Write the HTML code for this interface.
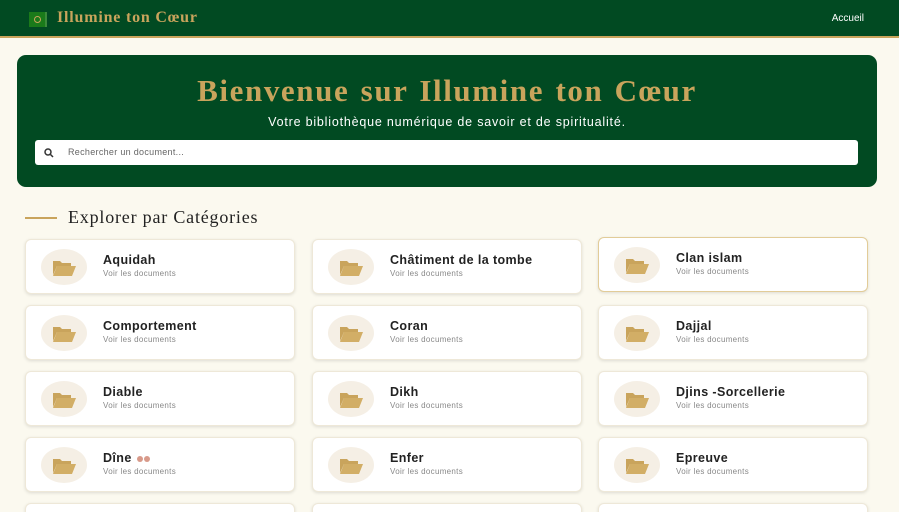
<!DOCTYPE html>
<html><head><meta charset="utf-8"><style>
*{box-sizing:border-box;margin:0;padding:0}
html,body{width:899px;height:512px;overflow:hidden}
body{background:#fbf9ef;font-family:"Liberation Sans",sans-serif;position:relative}
.nav{position:absolute;left:0;top:0;width:899px;height:38px;background:#014a22;border-bottom:2px solid #c9a45c}
.logo{position:absolute;left:29px;top:12px;width:18px;height:15px;background:#1a7a1a;border-right:2px solid #3b8a3b}
.logo:after{content:"";position:absolute;left:5px;top:4px;width:5px;height:5px;border:1px solid #c9a45c;border-radius:50%}
.brand{position:absolute;left:57px;top:9px;color:#c9a45c;font:bold 16px "Liberation Serif",serif;letter-spacing:0.8px}
.acc{position:absolute;right:35px;top:13px;color:#fff;font-size:10px}
.hero{position:absolute;left:17px;top:55px;width:860px;height:132px;background:#014a22;border-radius:9px}
.hero h1{position:absolute;left:0;width:100%;top:18px;text-align:center;color:#c9a45c;font:bold 31px "Liberation Serif",serif;letter-spacing:1.6px;word-spacing:2px}
.hero p{position:absolute;left:0;width:100%;top:60px;text-align:center;color:#fff;font-size:12.5px;letter-spacing:0.8px}
.search{position:absolute;left:18px;top:85px;width:823px;height:25px;background:#fff;border-radius:3px}
.search span{position:absolute;left:33px;top:7px;font-size:9px;color:#666;letter-spacing:0.3px}
.sec{position:absolute;left:25px;top:207px;font:18px "Liberation Serif",serif;color:#222;letter-spacing:0.8px}
.sec i{display:inline-block;width:32px;height:2px;background:#c9a45c;vertical-align:middle;margin-right:11px;position:relative;top:-1px}
.card{position:absolute;width:270px;height:55px;background:#fff;border-radius:6px;box-shadow:0 1px 3px rgba(0,0,0,.12);border:1px solid #eee8d8}
.card.h{border-color:#e2cc98}
.ic{position:absolute;left:15px;top:9px;width:46px;height:36px;border-radius:50%;background:#f5efe5}
.ic svg{position:absolute;left:11px;top:11px}
.t{position:absolute;left:77px;top:13px;font-weight:bold;font-size:12.5px;color:#222;letter-spacing:0.4px}
.s{position:absolute;left:77px;top:29px;font-size:8px;color:#888;letter-spacing:0.3px}
.dot{display:inline-block;width:6px;height:6px;border-radius:50%;background:#d89a8a;margin-left:1px;vertical-align:0}
</style></head><body>
<div class="nav"><div class="logo"></div><div class="brand">Illumine ton Cœur</div><div class="acc">Accueil</div></div>
<div class="hero"><h1>Bienvenue sur Illumine ton Cœur</h1><p>Votre bibliothèque numérique de savoir et de spiritualité.</p>
<div class="search"><svg style="position:absolute;left:9px;top:8px" width="10" height="10" viewBox="0 0 10 10"><circle cx="4" cy="4" r="3" fill="none" stroke="#333" stroke-width="1.5"/><path d="M6.5 6.5L9 9" stroke="#333" stroke-width="1.5"/></svg><span>Rechercher un document...</span></div></div>
<div class="sec"><i></i>Explorer par Catégories</div>
<div id="g"></div>
<script>
var n=["Aquidah","Châtiment de la tombe","Clan islam","Comportement","Coran","Dajjal","Diable","Dikh","Djins -Sorcellerie","Dîne <span class='dot'></span><span class='dot'></span>","Enfer","Epreuve","","",""];
var xs=[25,312,598],h="";
var f='<svg width="24" height="16" viewBox="0 0 24 16"><path d="M1 1h7l2 2h9v3H5L1 15z" fill="#c9a45c"/><path d="M5 6h19l-4 10H1z" fill="#d2ae66"/></svg>';
for(var i=0;i<15;i++){var r=Math.floor(i/3),c=i%3,y=239+r*66;if(i==2)y-=2;
h+='<div class="card'+(i==2?' h':'')+'" style="left:'+xs[c]+'px;top:'+y+'px"><div class="ic">'+f+'</div><div class="t">'+n[i]+'</div><div class="s">'+(n[i]?'Voir les documents':'')+'</div></div>';}
document.getElementById('g').innerHTML=h;
</script>
</body></html>
